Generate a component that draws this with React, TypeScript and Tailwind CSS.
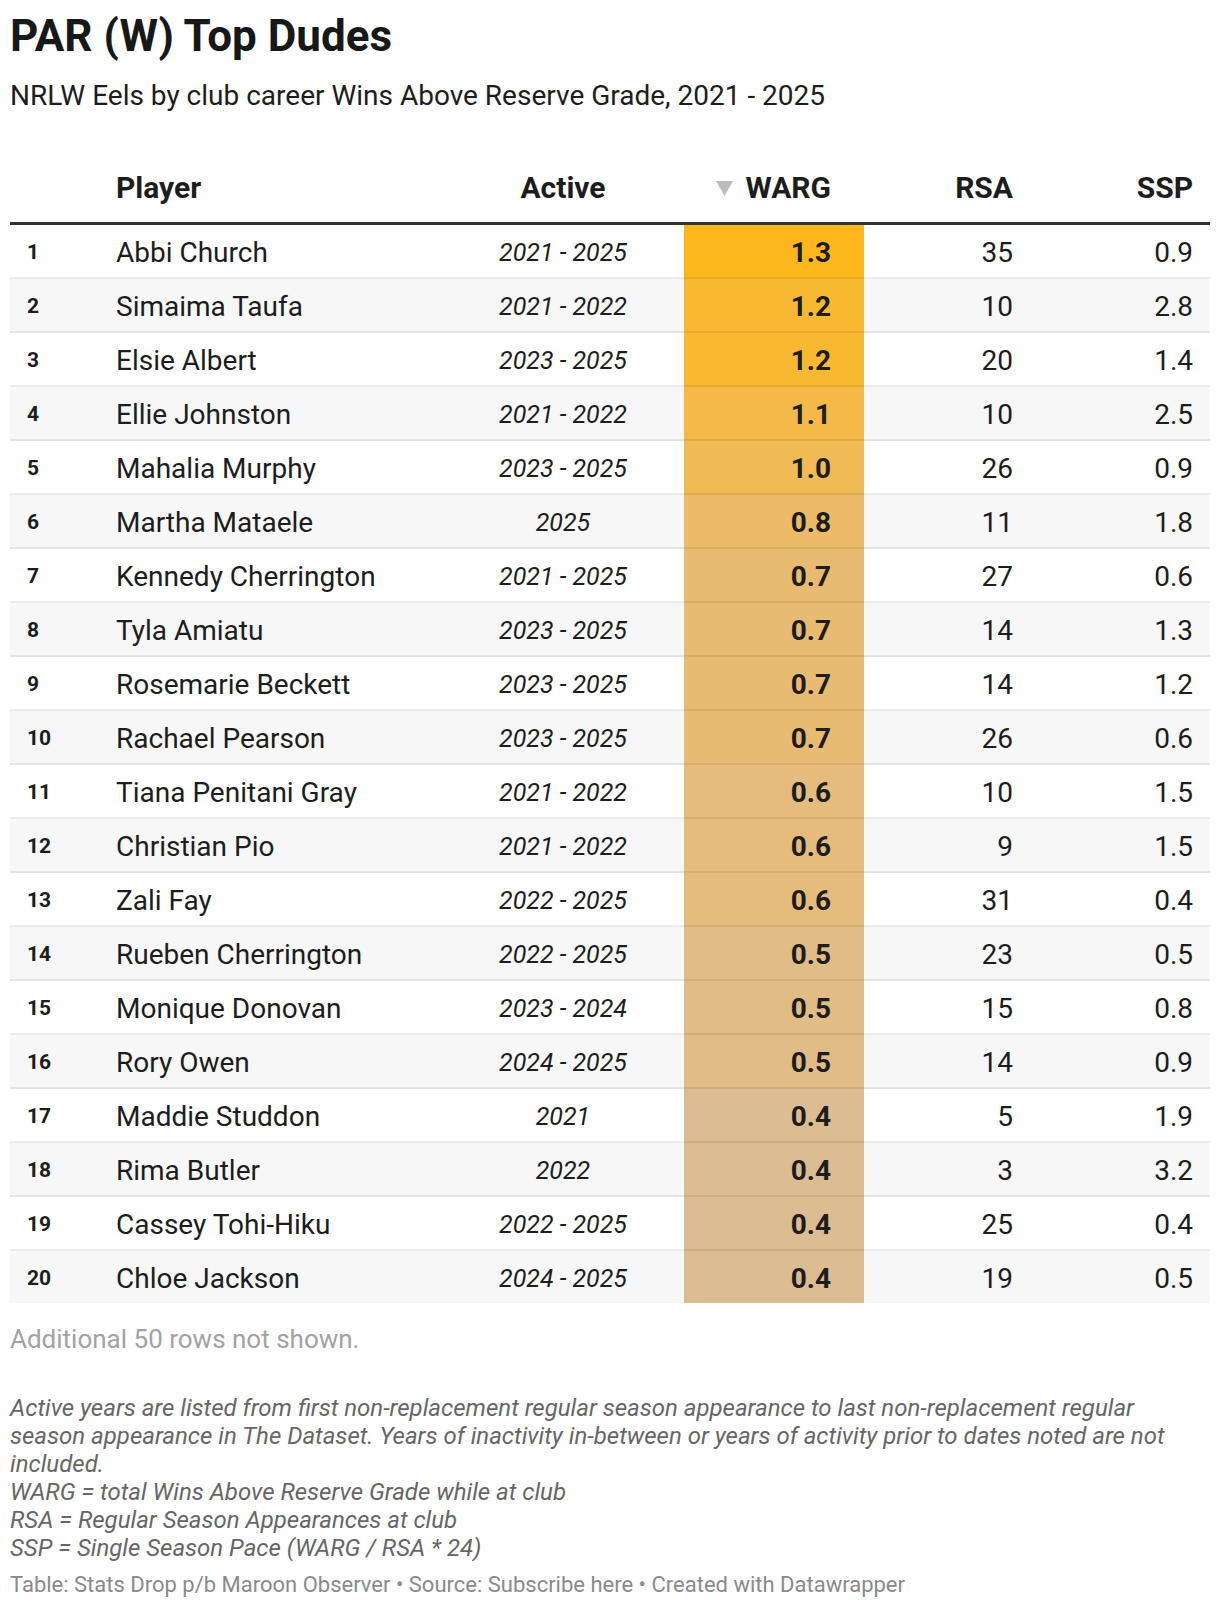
import React from "react";

type Row = { name: string; active: string; warg: string; rsa: number; ssp: string };

const rows: Row[] = [
  { name: "Abbi Church", active: "2021 - 2025", warg: "1.3", rsa: 35, ssp: "0.9" },
  { name: "Simaima Taufa", active: "2021 - 2022", warg: "1.2", rsa: 10, ssp: "2.8" },
  { name: "Elsie Albert", active: "2023 - 2025", warg: "1.2", rsa: 20, ssp: "1.4" },
  { name: "Ellie Johnston", active: "2021 - 2022", warg: "1.1", rsa: 10, ssp: "2.5" },
  { name: "Mahalia Murphy", active: "2023 - 2025", warg: "1.0", rsa: 26, ssp: "0.9" },
  { name: "Martha Mataele", active: "2025", warg: "0.8", rsa: 11, ssp: "1.8" },
  { name: "Kennedy Cherrington", active: "2021 - 2025", warg: "0.7", rsa: 27, ssp: "0.6" },
  { name: "Tyla Amiatu", active: "2023 - 2025", warg: "0.7", rsa: 14, ssp: "1.3" },
  { name: "Rosemarie Beckett", active: "2023 - 2025", warg: "0.7", rsa: 14, ssp: "1.2" },
  { name: "Rachael Pearson", active: "2023 - 2025", warg: "0.7", rsa: 26, ssp: "0.6" },
  { name: "Tiana Penitani Gray", active: "2021 - 2022", warg: "0.6", rsa: 10, ssp: "1.5" },
  { name: "Christian Pio", active: "2021 - 2022", warg: "0.6", rsa: 9, ssp: "1.5" },
  { name: "Zali Fay", active: "2022 - 2025", warg: "0.6", rsa: 31, ssp: "0.4" },
  { name: "Rueben Cherrington", active: "2022 - 2025", warg: "0.5", rsa: 23, ssp: "0.5" },
  { name: "Monique Donovan", active: "2023 - 2024", warg: "0.5", rsa: 15, ssp: "0.8" },
  { name: "Rory Owen", active: "2024 - 2025", warg: "0.5", rsa: 14, ssp: "0.9" },
  { name: "Maddie Studdon", active: "2021", warg: "0.4", rsa: 5, ssp: "1.9" },
  { name: "Rima Butler", active: "2022", warg: "0.4", rsa: 3, ssp: "3.2" },
  { name: "Cassey Tohi-Hiku", active: "2022 - 2025", warg: "0.4", rsa: 25, ssp: "0.4" },
  { name: "Chloe Jackson", active: "2024 - 2025", warg: "0.4", rsa: 19, ssp: "0.5" },
];

// heatmap fill for the WARG column
const heat: Record<string, string> = {
  "1.3": "bg-[#fdb71c]",
  "1.2": "bg-[#f8b832]",
  "1.1": "bg-[#f4b946]",
  "1.0": "bg-[#f0ba55]",
  "0.8": "bg-[#ebbb68]",
  "0.7": "bg-[#e8bb72]",
  "0.6": "bg-[#e5bc7c]",
  "0.5": "bg-[#e1bc87]",
  "0.4": "bg-[#dcbc91]",
};

const cols = "grid grid-cols-[90px_342px_242px_180px_166px_180px]";

export default function App() {
  return (
    <div className="min-h-screen bg-white px-[10px] pt-3 text-[#1d1d1d] font-['Roboto',sans-serif]">
      {/* Title */}
      <h1 className="text-[44px] leading-[48px] font-bold text-[#181818]">PAR (W) Top Dudes</h1>
      <p className="mt-[18px] text-[28px] leading-[36px]">
        NRLW Eels by club career Wins Above Reserve Grade, 2021 - 2025
      </p>

      {/* Table */}
      <div className="mt-[39px]">
        <div className={`${cols} h-[72px] items-center border-b-[3px] border-[#333333] text-[30px] font-bold`}>
          <div />
          <div className="pl-4">Player</div>
          <div className="text-center">Active</div>
          <div className="flex items-center justify-end gap-[13px] pr-[33px]">
            <svg width="17" height="15" viewBox="0 0 17 15" className="mt-[2px]">
              <polygon points="0,0 17,0 8.5,15" fill="#bdbdbd" />
            </svg>
            <span>WARG</span>
          </div>
          <div className="text-right pr-[17px]">RSA</div>
          <div className="text-right pr-[17px]">SSP</div>
        </div>

        {rows.map((r, i) => {
          const last = i === rows.length - 1;
          const line = last ? "pt-1" : "pt-1 border-b-2 border-[rgba(0,0,0,0.075)]";
          return (
            <div
              key={r.name}
              className={`${cols} ${last ? "h-[52px]" : "h-[54px]"} ${i % 2 === 1 ? "bg-[#f7f7f7]" : "bg-white"}`}
            >
              <div className={`${line} flex items-center pl-[17px] text-[21px] font-bold`}>{i + 1}</div>
              <div className={`${line} flex items-center pl-4 text-[28px]`}>{r.name}</div>
              <div className={`${line} flex items-center justify-center text-[25px] italic`}>{r.active}</div>
              <div className={`${line} ${heat[r.warg]} flex items-center justify-end pr-[33px] text-[28px] font-bold`}>
                {r.warg}
              </div>
              <div className={`${line} flex items-center justify-end pr-[17px] text-[28px]`}>{r.rsa}</div>
              <div className={`${line} flex items-center justify-end pr-[17px] text-[28px]`}>{r.ssp}</div>
            </div>
          );
        })}
      </div>

      <p className="mt-[21px] text-[26px] leading-[30px] text-[#a3a3a3]">Additional 50 rows not shown.</p>

      {/* Notes */}
      <div className="mt-[40px] text-[24px] leading-[28px] italic text-[#666666]">
        <p>
          Active years are listed from first non-replacement regular season appearance to last non-replacement regular
          <br />
          season appearance in The Dataset. Years of inactivity in-between or years of activity prior to dates noted are not
          <br />
          included.
        </p>
        <p>WARG = total Wins Above Reserve Grade while at club</p>
        <p>RSA = Regular Season Appearances at club</p>
        <p>SSP = Single Season Pace (WARG / RSA * 24)</p>
      </div>

      <p className="mt-[9px] text-[22px] leading-[28px] text-[#8a8a8a]">
        Table: Stats Drop p/b Maroon Observer • Source: Subscribe here • Created with Datawrapper
      </p>
    </div>
  );
}
